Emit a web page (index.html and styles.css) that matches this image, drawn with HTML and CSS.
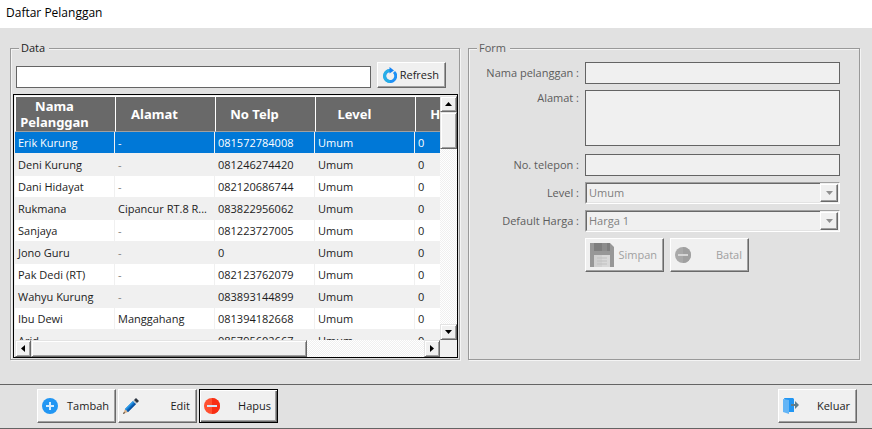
FILE: index.html
```html
<!DOCTYPE html>
<html lang="id">
<head>
<meta charset="utf-8">
<meta name="viewport" content="width=device-width, initial-scale=1">
<title>Daftar Pelanggan</title>
<link rel="stylesheet" href="styles.css">
</head>
<body>
<header class="titlebar"><h1>Daftar Pelanggan</h1></header>
<main class="panels">
  <fieldset class="group data">
    <legend>Data</legend>
    <div class="search">
      <input class="box" type="search" aria-label="Cari pelanggan">
      <button class="btn btn-refresh" type="button">
        <svg width="14" height="16" viewBox="0 0 14 16" aria-hidden="true"><path d="M11 5A5.500 5.500 0 1 1 7 3.500" fill="none" stroke="#1e90f5" stroke-width="3"/><path d="M7 14.500A5.500 5.500 0 0 1 7 3.500" fill="none" stroke="#27aee6" stroke-width="3"/><path d="M6.500 0l4.500 3.500-4.500 3z" fill="#1583f5"/></svg>
        <span>Refresh</span>
      </button>
    </div>
    <div class="list">
      <div class="viewport">
        <table>
          <thead>
            <tr><th>Nama Pelanggan</th><th>Alamat</th><th>No Telp</th><th>Level</th><th>Hutang</th></tr>
          </thead>
          <tbody>
            <tr class="selected"><td>Erik Kurung</td><td class="empty">-</td><td>081572784008</td><td>Umum</td><td>0</td></tr>
            <tr><td>Deni Kurung</td><td class="empty">-</td><td>081246274420</td><td>Umum</td><td>0</td></tr>
            <tr><td>Dani Hidayat</td><td class="empty">-</td><td>082120686744</td><td>Umum</td><td>0</td></tr>
            <tr><td>Rukmana</td><td>Cipancur RT.8 R...</td><td>083822956062</td><td>Umum</td><td>0</td></tr>
            <tr><td>Sanjaya</td><td class="empty">-</td><td>081223727005</td><td>Umum</td><td>0</td></tr>
            <tr><td>Jono Guru</td><td class="empty">-</td><td>0</td><td>Umum</td><td>0</td></tr>
            <tr><td>Pak Dedi (RT)</td><td class="empty">-</td><td>082123762079</td><td>Umum</td><td>0</td></tr>
            <tr><td>Wahyu Kurung</td><td class="empty">-</td><td>083893144899</td><td>Umum</td><td>0</td></tr>
            <tr><td>Ibu Dewi</td><td>Manggahang</td><td>081394182668</td><td>Umum</td><td>0</td></tr>
            <tr><td>Arid</td><td class="empty"></td><td>085795602667</td><td>Umum</td><td>0</td></tr>
          </tbody>
        </table>
      </div>
      <div class="scroll vertical">
        <button class="arrow" type="button" aria-label="Gulir ke atas"><svg width="7" height="4" viewBox="0 0 7 4"><path d="M0 4L3.5 0 7 4z"/></svg></button>
        <div class="thumb"></div>
        <button class="arrow" type="button" aria-label="Gulir ke bawah"><svg width="7" height="4" viewBox="0 0 7 4"><path d="M0 0h7L3.5 4z"/></svg></button>
      </div>
      <div class="scroll horizontal">
        <button class="arrow" type="button" aria-label="Gulir ke kiri"><svg width="4" height="7" viewBox="0 0 4 7"><path d="M4 0v7L0 3.5z"/></svg></button>
        <div class="thumb"></div>
        <button class="arrow" type="button" aria-label="Gulir ke kanan"><svg width="4" height="7" viewBox="0 0 4 7"><path d="M0 0v7l4-3.5z"/></svg></button>
      </div>
    </div>
  </fieldset>

  <fieldset class="group form" disabled>
    <legend>Form</legend>
    <div class="fields">
      <label for="nama">Nama pelanggan :</label>
      <input class="box" id="nama" type="text">
      <label class="top" for="alamat">Alamat :</label>
      <textarea class="box" id="alamat"></textarea>
      <label for="telepon">No. telepon :</label>
      <input class="box" id="telepon" type="tel">
      <label for="level">Level :</label>
      <div class="combo">
        <select id="level"><option>Umum</option></select>
        <span class="drop"><svg width="7" height="4" viewBox="0 0 7 4" aria-hidden="true"><path d="M0 0h7L3.5 4z"/></svg></span>
      </div>
      <label for="harga">Default Harga :</label>
      <div class="combo">
        <select id="harga"><option>Harga 1</option></select>
        <span class="drop"><svg width="7" height="4" viewBox="0 0 7 4" aria-hidden="true"><path d="M0 0h7L3.5 4z"/></svg></span>
      </div>
      <div class="actions">
        <button class="btn" type="button">
          <svg width="24" height="24" viewBox="0 0 24 24" aria-hidden="true"><path d="M0 0h20l4 4v20H0z" fill="#979797"/><path d="M4 0h16v8H4z" fill="#7f7f7f"/><path d="M12 0h5v8h-5z" fill="#8d8d8d"/><path d="M4 12h16v12H4z" fill="#d0d0d0"/><path d="M12 12h8v12h-8z" fill="#d8d8d8"/><path d="M7 15h10M7 18h10M7 21h10" stroke="#c0c0c0"/></svg>
          <span>Simpan</span>
        </button>
        <button class="btn" type="button">
          <svg width="16" height="16" viewBox="0 0 16 16" aria-hidden="true"><circle cx="8" cy="8" r="8" fill="#a9a9a9"/><path d="M8 0a8 8 0 0 1 0 16z" fill="#a0a0a0"/><path d="M3 7h10v2H3z" fill="#d6d6d6"/></svg>
          <span>Batal</span>
        </button>
      </div>
    </div>
  </fieldset>
</main>

<footer class="toolbar">
  <button class="btn" type="button">
    <svg width="16" height="16" viewBox="0 0 16 16" aria-hidden="true"><circle cx="8" cy="8" r="8" fill="#2196f3"/><path d="M4 7h3V4h2v3h3v2H9v3H7V9H4z" fill="#d5ecff"/></svg>
    <span>Tambah</span>
  </button>
  <button class="btn" type="button">
    <svg width="16" height="16" viewBox="0 0 16 16" aria-hidden="true"><path d="M0 16l2-5 3 3z" fill="#d8b28c"/><path d="M0 16l1-2 1 1z" fill="#222"/><path d="M2 11l8-8 3 3-8 8z" fill="#0f6fc6"/><path d="M2 11l8-8 1 1-8 8z" fill="#2b9be8"/><path d="M4 13l8-8 1 1-8 8z" fill="#0a4f9c"/><path d="M10 3l1-1 3 3-1 1z" fill="#b9c3cc"/><path d="M11 2l2-2 3 3-2 2z" fill="#2b3440"/></svg>
    <span>Edit</span>
  </button>
  <button class="btn default" type="button">
    <svg width="16" height="16" viewBox="0 0 16 16" aria-hidden="true"><circle cx="8" cy="8" r="8" fill="#ff5030"/><path d="M8 0a8 8 0 0 1 0 16z" fill="#f82e14"/><path d="M3 7h10v2H3z" fill="#d5e8f8"/></svg>
    <span>Hapus</span>
  </button>
  <button class="btn exit" type="button">
    <svg width="16" height="16" viewBox="0 0 16 16" aria-hidden="true"><path d="M1 0h9l1 1v13H6z" fill="#2196f3"/><path d="M0 1l6 1v14l-6-2z" fill="#64b5f6"/><path d="M8 6h4V3l4 4-4 4V8H8z" fill="#607d8b"/></svg>
    <span>Keluar</span>
  </button>
</footer>
</body>
</html>
```
FILE: styles.css
```css
* { box-sizing: border-box; }

body {
  margin: 0;
  min-height: 100vh;
  background: #e1e1e1;
  color: #1c1c1c;
  font: 11px/16px "Open Sans", "Noto Sans", sans-serif;
}

button, input, select, textarea { font: inherit; color: inherit; border-radius: 0; }

.titlebar { height: 28px; padding: 0 6px; background: #fff; }
.titlebar h1 { margin: 0; color: #000; font-size: 12px; font-weight: 400; line-height: 26px; }

.panels {
  display: grid;
  grid-template-columns: 450fr 392fr;
  gap: 8px;
  padding: 11px 12px 24px 10px;
}

.group {
  min-width: 0;
  margin: 0;
  padding: 5px 1px 1px 2px;
  border: 1px solid #999;
  box-shadow: inset 1px 1px #f4f4f4, 1px 1px #f4f4f4;
}
.group legend { margin-left: 6px; padding: 0 4px 0 2px; line-height: 18px; background: #e1e1e1; }

.box {
  width: 100%;
  height: 22px;
  margin: 0;
  padding: 0 4px;
  border: 1px solid #646464;
  background: #fff;
  outline: 0;
  appearance: none;
}

.search { display: flex; gap: 6px; padding: 0 12px 0 3px; margin-bottom: 6px; align-items: flex-end; }
.search .box { flex: 1; min-width: 0; }

.btn {
  display: flex;
  align-items: center;
  justify-content: space-between;
  width: 79px;
  height: 34px;
  padding: 0 6px 0 4px;
  border: 1px solid;
  border-color: #fff #696969 #696969 #fff;
  box-shadow: inset -1px -1px #a0a0a0;
  background: #f0f0f0;
}
.btn svg { flex: none; }
.btn-refresh { width: 69px; height: 26px; padding: 0 6px 0 5px; }

.list {
  display: grid;
  grid-template-columns: minmax(0, 1fr) 17px;
  grid-template-rows: 244px 17px;
  padding: 1px 0 0 1px;
  border: 1px solid #000;
  background: #f0f0f0;
}
.viewport { overflow: hidden; }

table { width: 500px; table-layout: fixed; border-collapse: separate; border-spacing: 0; }
th {
  height: 36px;
  padding: 0 24px 0 2px;
  border-top: 1px solid #fff;
  border-left: 1px solid #fff;
  border-bottom: 1px solid #a0a0a0;
  background: #696969;
  color: #fff;
  font: bold 13px/16px "Noto Sans", "Open Sans", sans-serif;
}
td {
  height: 22px;
  padding: 0 3px;
  border-right: 1px solid #f0f0f0;
  border-bottom: 1px solid #f0f0f0;
  background: #fff;
  white-space: nowrap;
}
tr:nth-child(even) td { background: #f0f0f0; }
.empty { color: #808080; }
.selected td { background: #0078d7; color: #fff; }

.scroll { display: flex; background: repeating-conic-gradient(#fff 0 25%, #f0f0f0 0 50%) 0 0 / 2px 2px; }
.vertical { flex-direction: column; }
.arrow, .thumb {
  border: 1px solid;
  border-color: #e3e3e3 #696969 #696969 #e3e3e3;
  box-shadow: inset 1px 1px #fff, inset -1px -1px #a0a0a0;
  background: #f0f0f0;
}
.arrow { display: grid; place-items: center; flex: none; padding: 0; }
.vertical .arrow { width: 17px; height: 16px; }
.horizontal .arrow { width: 16px; height: 17px; }
.arrow svg { display: block; }
.vertical .arrow:last-child { margin-top: auto; }
.vertical .thumb { height: 37px; }
.horizontal .thumb { flex: 0 0 65%; }
.horizontal .arrow:last-child { margin-left: auto; }

.form { color: #5c5c5c; }
.fields {
  display: grid;
  grid-template-columns: 107px minmax(0, 1fr);
  gap: 6px;
  padding: 0 18px 0 1px;
}
.fields label { align-self: center; text-align: right; }
.fields .top { align-self: start; }
.fields .box { background: #f0f0f0; }
.fields textarea.box { display: block; height: 56px; margin-bottom: 2px; resize: none; }

.combo {
  display: flex;
  height: 22px;
  border: 1px solid;
  border-color: #a0a0a0 #fff #fff #a0a0a0;
  background: #f0f0f0;
}
.combo select {
  flex: 1;
  min-width: 0;
  padding: 0 2px;
  border: 1px solid;
  border-color: #696969 #f0f0f0 #e3e3e3 #696969;
  border-right: 0;
  background: none;
  color: #808080;
  opacity: 1;
  appearance: none;
}
.drop {
  display: grid;
  place-items: center;
  width: 18px;
  margin: 1px 1px 1px 0;
  border: 1px solid;
  border-color: #fff #696969 #696969 #fff;
  box-shadow: inset -1px -1px #a0a0a0;
}
.drop svg { fill: #909090; }

.actions { grid-column: 2; display: flex; gap: 6px; }
.actions .btn { color: #a0a0a0; }

.toolbar {
  display: flex;
  gap: 2px;
  height: 45px;
  padding: 4px 15px 0 37px;
  border-top: 1px solid #646464;
  border-bottom: 1px solid #646464;
}
.toolbar .default { border-color: #000; box-shadow: inset 1px 1px #fff, inset -1px -1px #696969, inset -2px -2px #a0a0a0; }
.exit { margin-left: auto; }
```
